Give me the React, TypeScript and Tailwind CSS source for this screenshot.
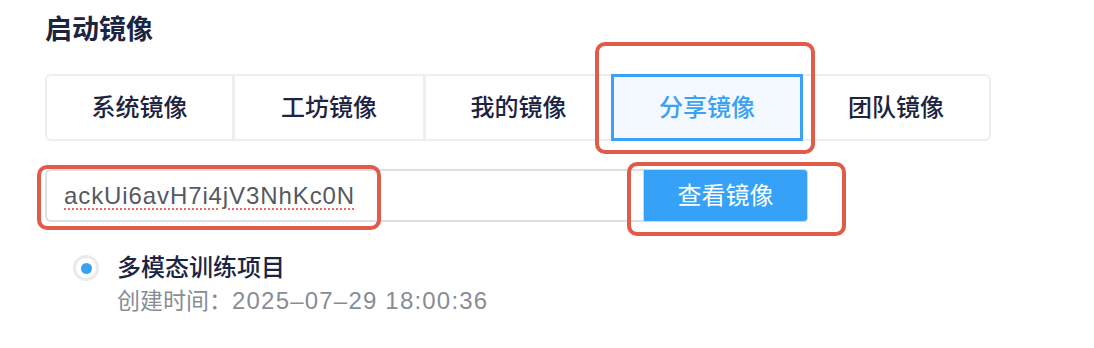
import React from "react";

const FONT = { fontFamily: '"Liberation Sans", "Noto Sans CJK SC", sans-serif' };

function RedBox({ className }: { className: string }) {
  return (
    <div
      className={`pointer-events-none absolute rounded-[10px] border-[4px] border-[#e25b48] ${className}`}
    />
  );
}

export default function App() {
  const tabs = [
    { label: "系统镜像", w: "w-[185px]", first: true },
    { label: "工坊镜像", w: "w-[191px]" },
    { label: "我的镜像", w: "w-[188px]" },
  ];
  return (
    <div
      className="w-[1094px] h-[348px] bg-white pl-[45px] pt-[14px] text-[#1c2442]"
      style={FONT}
    >
      <div className="h-[32px] leading-[32px] text-[27px] font-semibold text-[#1b2441]">
        启动镜像
      </div>

      <div className="mt-[28px] flex w-[946px] h-[67px] rounded-[6px] border-2 border-[#eeeeee]">
        {tabs.map((t) => (
          <div
            key={t.label}
            className={`${t.w} flex items-center justify-center text-[24px] font-medium ${
              t.first ? "" : "border-l-[3px] border-[#eeeeee]"
            }`}
          >
            {t.label}
          </div>
        ))}
        <div className="relative -my-[2px] w-[192px] flex items-center justify-center border-[3px] border-[#3ba1f6] bg-[#f4f8ff] text-[24px] font-medium text-[#3ba1f6]">
          分享镜像
          <RedBox className="-left-[19px] -right-[15px] -top-[35px] -bottom-[16px]" />
        </div>
        <div className="w-[186px] flex items-center justify-center text-[24px] font-medium">
          团队镜像
        </div>
      </div>

      <div className="mt-[28px] flex h-[53px]">
        <div className="relative w-[598px] h-full flex items-center pl-[17px] rounded-l-[6px] border-2 border-r-0 border-[#dcdfe5] bg-white">
          <span className="text-[24px] tracking-[0.9px] text-[#55595f] underline decoration-dotted decoration-[#ea6a6a] decoration-2 underline-offset-[5px]">
            ackUi6avH7i4jV3NhKc0N
          </span>
          <RedBox className="-left-[10px] -top-[6px] -bottom-[10px] w-[344px]" />
        </div>
        <div className="relative w-[165px] h-full flex items-center justify-center rounded-r-[4px] border border-[#c9d9ea] bg-[#35a2f8] text-[24px] text-white">
          查看镜像
          <RedBox className="-left-[17px] -right-[39px] -top-[8px] -bottom-[15px]" />
        </div>
      </div>

      <div className="mt-[31px] flex items-start pl-[28px]">
        <div className="mt-[2px] w-[26px] h-[26px] rounded-full border-[3px] border-[#e9ebee] bg-white flex items-center justify-center">
          <div className="w-[11px] h-[11px] rounded-full bg-[#35a2f8]" />
        </div>
        <div className="ml-[18px] flex flex-col">
          <div className="h-[30px] leading-[30px] text-[24px] font-medium text-[#1b2441]">
            多模态训练项目
          </div>
          <div className="mt-[5px] h-[26px] leading-[26px] text-[23px] text-[#878d96]">
            创建时间：<span className="text-[24px] tracking-[1.2px]">2025–07–29 18:00:36</span>
          </div>
        </div>
      </div>
    </div>
  );
}
